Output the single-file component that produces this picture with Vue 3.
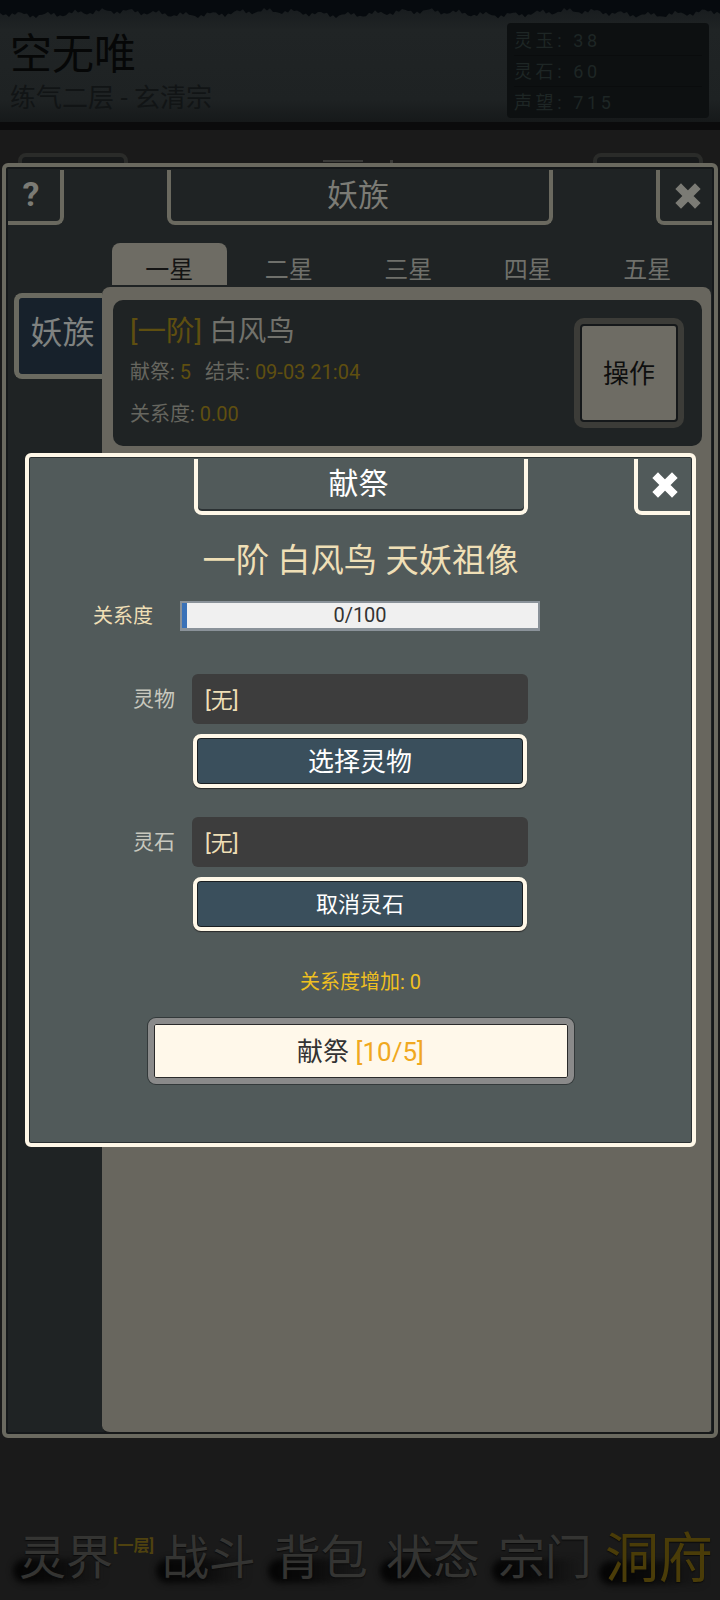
<template>
  <div class="page">
    <header class="top">
      <svg class="torn" viewBox="0 0 720 24" preserveAspectRatio="none">
        <polygon :points="tornPoints" fill="#060a0e" />
      </svg>
      <div class="who">
        <div class="who-name">空无唯</div>
        <div class="who-rank">练气二层 - 玄清宗</div>
      </div>
      <div class="stats">
        <div v-for="s in stats" :key="s.label" class="stat">{{ s.label }}: {{ s.value }}</div>
      </div>
    </header>

    <div class="under">
      <span class="under-btn"></span>
      <span class="under-marks"><i class="mark-line"></i><i class="mark-dot"></i></span>
      <span class="under-btn"></span>
    </div>

    <nav class="bottom-nav">
      <div v-for="n in nav" :key="n.label" class="nav-item" :class="{ current: n.current }">
        <span class="nav-text">{{ n.label }}</span>
        <span v-if="n.badge" class="nav-badge">{{ n.badge }}</span>
      </div>
    </nav>

    <!-- 妖族 panel -->
    <section class="panel">
      <div class="panel-bar">
        <div class="corner corner-left">?</div>
        <div class="panel-title">妖族</div>
        <div class="corner corner-right">
          <svg width="28" height="26" viewBox="0 0 28 26">
            <path d="M7 6 L21 20 M21 6 L7 20" stroke="#7b7b75" stroke-width="8" stroke-linecap="square" />
          </svg>
        </div>
      </div>
      <div class="panel-body">
        <aside class="side">
          <div class="side-tab">妖族</div>
        </aside>
        <div class="main">
          <div class="tabs">
            <div v-for="(t, i) in tabs" :key="t" class="tab" :class="{ active: i === 0 }">{{ t }}</div>
          </div>
          <div class="sheet">
            <div class="card">
              <div class="card-info">
                <div class="card-name"><span class="gold">[一阶]</span> 白风鸟</div>
                <div class="card-line">献祭: <span class="gold">5</span><span class="sep"></span>结束: <span class="gold">09-03 21:04</span></div>
                <div class="card-line card-line-last">关系度: <span class="gold">0.00</span></div>
              </div>
              <div class="card-action"><div class="card-btn">操作</div></div>
            </div>
          </div>
        </div>
      </div>
    </section>

    <div class="dialog">
      <div class="dialog-bar">
        <div class="dialog-title">献祭</div>
        <div class="dialog-close">
          <svg width="28" height="26" viewBox="0 0 28 26">
            <path d="M7 6 L21 20 M21 6 L7 20" stroke="#ffffff" stroke-width="8" stroke-linecap="square" />
          </svg>
        </div>
      </div>
      <div class="dialog-head">一阶 白风鸟 天妖祖像</div>
      <div class="relation">
        <span class="relation-label">关系度</span>
        <div class="bar">
          <div class="bar-fill"></div>
          <span class="bar-text">0/100</span>
        </div>
      </div>

      <div class="form form-first">
        <label class="form-label">灵物</label>
        <div class="field">[无]</div>
        <button class="pick pick-big">选择灵物</button>
      </div>
      <div class="form form-second">
        <label class="form-label">灵石</label>
        <div class="field">[无]</div>
        <button class="pick">取消灵石</button>
      </div>

      <div class="bonus">关系度增加: 0</div>
      <button class="offer">献祭 <span class="offer-count">[10/5]</span></button>
    </div>
  </div>
</template>

<script setup>
const stats = [
  { label: '灵玉', value: '38' },
  { label: '灵石', value: '60' },
  { label: '声望', value: '715' },
]

const tabs = ['一星', '二星', '三星', '四星', '五星']

const nav = [
  { label: '灵界', badge: '[一层]' },
  { label: '战斗' },
  { label: '背包' },
  { label: '状态' },
  { label: '宗门' },
  { label: '洞府', current: true },
]

// rough brush edge along the top of the header
let tornPoints = '0,0'
for (let x = 0; x <= 720; x += 3) {
  const y = 13 + Math.sin(x * 0.9) * 1.5 + Math.sin(x * 0.23) * 2 + Math.sin(x * 0.041) * 2
  tornPoints += ` ${x},${y.toFixed(1)}`
}
tornPoints += ' 720,0'
</script>

<style>
html, body {
  margin: 0;
  background: #1a1a1a;
}
</style>

<style scoped>
* {
  box-sizing: border-box;
}
.page {
  position: relative;
  width: 720px;
  height: 1600px;
  display: flex;
  flex-direction: column;
  overflow: hidden;
  background: #1a1a1a;
  font-family: Roboto, "Noto Sans CJK SC", sans-serif;
}

/* header */
.top {
  position: relative;
  height: 130px;
  padding: 23px 11px 0 10px;
  display: flex;
  justify-content: space-between;
  align-items: flex-start;
  background: linear-gradient(#15191c 0, #202425 30px, #1e2223 100px, #16191a 122px);
  border-bottom: 8px solid #0b0b0c;
}
.torn {
  position: absolute;
  top: 0;
  left: 0;
  width: 720px;
  height: 24px;
}
.who {
  position: relative;
  padding-top: 6px;
}
.who-name {
  font-size: 42px;
  line-height: 52px;
  color: #060707;
}
.who-rank {
  margin-top: 2px;
  font-size: 26px;
  line-height: 30px;
  color: #111415;
}
.stats {
  position: relative;
  width: 202px;
  height: 95px;
  padding: 2px 7px;
  background: #0d1011;
  border-radius: 4px;
}
.stat {
  height: 31px;
  line-height: 31px;
  font-size: 18px;
  letter-spacing: 3.6px;
  color: #1e2625;
  border-bottom: 1px solid #0a0c0d;
}
.stat:last-child {
  border-bottom: 0;
}

/* things left behind the panel */
.under {
  height: 40px;
  margin-top: 23px;
  padding: 0 17px 0 18px;
  display: flex;
  justify-content: space-between;
}
.under-btn {
  width: 110px;
  height: 40px;
  background: #17191a;
  border: 4px solid #2a2b29;
  border-radius: 8px;
}
.under-marks {
  width: 70px;
  padding-top: 7px;
  margin-right: 5px;
  display: flex;
  justify-content: space-between;
}
.mark-line {
  width: 40px;
  height: 2px;
  background: #3a3a38;
}
.mark-dot {
  width: 3px;
  height: 3px;
  background: #3a3a38;
}

/* bottom nav */
.bottom-nav {
  margin-top: auto;
  height: 70px;
  padding: 0 8px 0 19px;
  display: flex;
  align-items: flex-start;
  gap: 18px;
}
.nav-item {
  position: relative;
  display: flex;
  align-items: flex-start;
}
.nav-item::before {
  content: "";
  position: absolute;
  left: -6px;
  width: 92px;
  top: 29px;
  height: 24px;
  border-radius: 12px 4px 4px 12px;
  background: linear-gradient(90deg, #040404 0, #0a0a0a 45%, rgba(10, 10, 10, 0) 100%);
  filter: blur(3px);
}
.nav-text {
  position: relative;
  font-size: 47px;
  line-height: 56px;
  color: #343432;
  text-shadow: 0 1px 1px #0b0b0b;
  white-space: nowrap;
}
.nav-badge {
  position: relative;
  margin-top: 6px;
  margin-right: -10px;
  font-size: 16px;
  font-weight: 700;
  line-height: 20px;
  color: #4f420f;
  white-space: nowrap;
}
.nav-item.current {
  margin-top: -3px;
  margin-left: -5px;
}
.current::before {
  width: 108px;
  top: 34px;
}
.current .nav-text {
  font-size: 54px;
  line-height: 66px;
  color: #4a3c08;
}

/* 妖族 panel */
.panel {
  position: absolute;
  left: 2px;
  top: 163px;
  width: 716px;
  height: 1275px;
  display: flex;
  flex-direction: column;
  background: #1f2324;
  border: 4px solid #6a695f;
  border-radius: 6px;
  box-shadow: inset 0 0 0 2px #15181a;
}
.panel-bar {
  height: 58px;
  padding: 3px 2px 0;
  display: flex;
  justify-content: space-between;
  color: #7b7b75;
}
.corner,
.panel-title {
  height: 55px;
  display: flex;
  align-items: center;
  justify-content: center;
  border-bottom: 4px solid #6a695f;
}
.corner {
  width: 56px;
}
.corner-left {
  padding: 0 6px 4px 0;
  border-right: 4px solid #6a695f;
  border-bottom-right-radius: 8px;
  font-size: 34px;
  font-weight: 700;
}
.corner-right {
  padding-left: 4px;
  border-left: 4px solid #6a695f;
  border-bottom-left-radius: 8px;
}
.panel-title {
  width: 386px;
  padding: 0 4px 6px 0;
  border-left: 4px solid #6a695f;
  border-right: 4px solid #6a695f;
  border-radius: 0 0 8px 8px;
  font-size: 31px;
}
.panel-body {
  flex: 1;
  display: flex;
}
.side {
  width: 96px;
  padding: 68px 0 0 8px;
}
.side-tab {
  height: 86px;
  padding: 0 0 12px 4px;
  display: flex;
  align-items: center;
  justify-content: center;
  background: #17212b;
  border: 5px solid #6a6a60;
  border-right: 0;
  border-radius: 8px 0 0 8px;
  font-size: 32px;
  color: #7f8280;
}
.main {
  width: 609px;
  padding-top: 18px;
  display: flex;
  flex-direction: column;
}
.tabs {
  height: 44px;
  padding-left: 10px;
  display: flex;
  gap: 5px;
}
.tab {
  width: 114.5px;
  height: 42px;
  padding-top: 2px;
  text-align: center;
  font-size: 24px;
  line-height: 50px;
  color: #6f706b;
  overflow: hidden;
  border-radius: 8px 8px 0 0;
}
.tab.active {
  background: #6e6c64;
  color: #141414;
}
.sheet {
  flex: 1;
  padding: 13px 9px 0 11px;
  background: #68665e;
  border-radius: 8px 8px 4px 8px;
  border-bottom: 2px solid #17191a;
}
.card {
  height: 146px;
  padding: 0 18px 0 17px;
  display: flex;
  justify-content: space-between;
  align-items: center;
  background: #1f2324;
  border-radius: 10px;
}
.card-info {
  align-self: flex-start;
  padding-top: 12px;
}
.card-name {
  font-size: 28.5px;
  line-height: 40px;
  color: #71716b;
}
.gold {
  color: #5f4f10;
}
.card-line {
  margin-top: 6px;
  font-size: 20px;
  line-height: 28px;
  color: #66665f;
}
.card-line-last {
  margin-top: 14px;
}
.sep {
  display: inline-block;
  width: 14px;
}
.card-action {
  width: 110px;
  height: 110px;
  padding: 6px;
  background: #3c3c38;
  border-radius: 10px;
}
.card-btn {
  height: 100%;
  padding-bottom: 4px;
  display: flex;
  align-items: center;
  justify-content: center;
  background: #6e6c64;
  border: 2px solid #15181a;
  border-radius: 4px;
  font-size: 26px;
  color: #0e0f0f;
}

/* 献祭 dialog */
.dialog {
  position: absolute;
  left: 25px;
  top: 453px;
  width: 671px;
  height: 694px;
  background: #515a5a;
  border: 4px solid #fff8e8;
  border-radius: 6px;
  box-shadow: inset 0 0 0 1px #2b3133;
}
.dialog-bar {
  position: relative;
  height: 58px;
  padding-top: 2px;
  display: flex;
  justify-content: center;
  color: #fff;
}
.dialog-title,
.dialog-close {
  height: 56px;
  display: flex;
  align-items: center;
  justify-content: center;
  border-bottom: 4px solid #fff8e8;
}
.dialog-title {
  width: 334px;
  padding: 0 4px 8px 0;
  border-left: 4px solid #fff8e8;
  border-right: 4px solid #fff8e8;
  border-radius: 0 0 8px 8px;
  box-shadow: inset 0 -2px 0 #2b3133;
  font-size: 30px;
}
.dialog-close {
  position: absolute;
  top: 2px;
  right: 2px;
  width: 56px;
  padding-left: 2px;
  border-left: 4px solid #fff8e8;
  border-bottom-left-radius: 8px;
}
.dialog-head {
  margin-top: 21px;
  text-align: center;
  font-size: 33.3px;
  line-height: 50px;
  color: #efdfb6;
}
.relation {
  margin-top: 14px;
  padding-left: 64px;
  display: flex;
  align-items: center;
}
.relation-label {
  width: 87px;
  padding-bottom: 2px;
  font-size: 20px;
  color: #efdfb6;
}
.bar {
  position: relative;
  width: 360px;
  height: 30px;
  background: #f0f0f0;
  border: 2px solid #8a9299;
  border-bottom-width: 3px;
  text-align: center;
}
.bar-fill {
  position: absolute;
  left: 0;
  top: 0;
  bottom: 0;
  width: 5px;
  background: #3a72b8;
}
.bar-text {
  position: relative;
  font-size: 20px;
  line-height: 25px;
  color: #333;
  display: block;
}
.form {
  display: grid;
  grid-template-columns: 146px 336px;
  column-gap: 17px;
  row-gap: 10px;
  align-items: center;
}
.form-first {
  margin-top: 43px;
}
.form-second {
  margin-top: 29px;
}
.form-label {
  padding-bottom: 4px;
  text-align: right;
  font-size: 21px;
  color: #c8c8be;
}
.field {
  height: 50px;
  padding-left: 13px;
  background: #3d3d3d;
  border-radius: 6px;
  font-size: 22px;
  line-height: 54px;
  color: #efdfb6;
}
.pick {
  grid-column: 2;
  width: 334px;
  height: 54px;
  margin-left: 1px;
  padding: 0 0 4px;
  background: #3a4f5c;
  border: 4px solid #fff8e8;
  border-radius: 8px;
  box-shadow: inset 0 0 0 1px #1a1f22, 0 1px 1px #2a2a2a;
  font-family: inherit;
  font-size: 22px;
  color: #fff;
}
.pick-big {
  font-size: 26px;
}
.bonus {
  margin-top: 36px;
  text-align: center;
  font-size: 20px;
  line-height: 30px;
  color: #f0c020;
}
.offer {
  display: block;
  width: 426px;
  height: 66px;
  margin: 21px auto 0;
  padding: 0 0 4px;
  background: #fff8ea;
  border: 6px solid #8a8a8a;
  border-radius: 8px;
  box-shadow: 0 0 0 1px #33393a, inset 0 0 0 1px #2a2a2a;
  font-family: inherit;
  font-size: 26px;
  color: #333;
}
.offer-count {
  color: #f0a820;
}
</style>
